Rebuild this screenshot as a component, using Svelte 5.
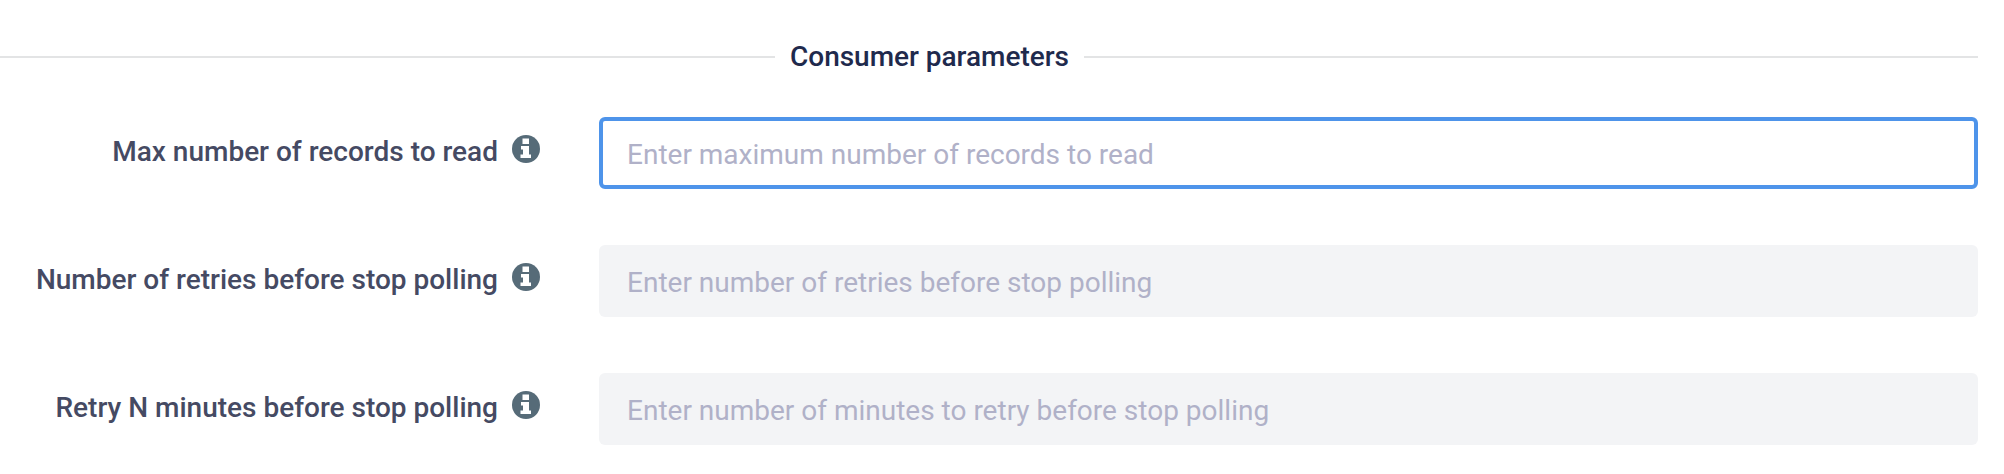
<script>
  const rows = [
    { label: 'Max number of records to read', placeholder: 'Enter maximum number of records to read', focused: true },
    { label: 'Number of retries before stop polling', placeholder: 'Enter number of retries before stop polling', focused: false },
    { label: 'Retry N minutes before stop polling', placeholder: 'Enter number of minutes to retry before stop polling', focused: false }
  ];
</script>

<div class="page">
  <div class="divider">
    <span class="rule left"></span>
    <h3>Consumer parameters</h3>
    <span class="rule"></span>
  </div>
  <form class="rows">
    {#each rows as row}
      <div class="row">
        <div class="label-col">
          <span class="label">{row.label}</span>
          <svg class="info" viewBox="0 0 28 28" aria-hidden="true">
            <circle cx="14" cy="14" r="14" fill="#566b78" />
            <path fill="#fff" d="M10.5 3.5h6.5v5.5h-6.5z M9 11h8v8.5h2v3.5H8.5v-3.5h2.5v-5H9z" />
          </svg>
        </div>
        <div class="field" class:focused={row.focused}>{row.placeholder}</div>
      </div>
    {/each}
  </form>
</div>

<style>
  :global(body) {
    margin: 0;
    background: #fff;
  }
  .page {
    width: 1978px;
    padding-top: 38px;
    font-family: Roboto, sans-serif;
  }
  .divider {
    display: flex;
    align-items: center;
    gap: 15px;
    height: 38px;
  }
  .rule {
    flex: 1;
    height: 2px;
    background: #e3e4e5;
  }
  .rule.left {
    flex: none;
    width: 775px;
  }
  h3 {
    margin: 0;
    font-size: 28px;
    font-weight: 500;
    letter-spacing: -0.02px;
    color: #1f2a4d;
    line-height: 38px;
  }
  .rows {
    display: flex;
    flex-direction: column;
    gap: 56px;
    margin-top: 41px;
  }
  .row {
    display: flex;
    height: 72px;
  }
  .label-col {
    width: 540px;
    margin-right: 59px;
    height: 72px;
    display: flex;
    justify-content: flex-end;
    align-items: center;
    gap: 14px;
    padding-bottom: 9px;
    box-sizing: border-box;
  }
  .label {
    font-size: 28px;
    font-weight: 500;
    color: #454a63;
    white-space: nowrap;
    margin-top: 5px;
  }
  .info {
    width: 28px;
    height: 28px;
    flex: none;
  }
  .field {
    flex: 1;
    height: 72px;
    box-sizing: border-box;
    border-radius: 6px;
    background: #f3f4f6;
    padding: 2px 28px 0;
    display: flex;
    align-items: center;
    font-size: 28px;
    color: #b0b1c8;
  }
  .focused {
    background: #fff;
    border: 4px solid #4e94ea;
    padding: 2px 24px 0;
  }
</style>
